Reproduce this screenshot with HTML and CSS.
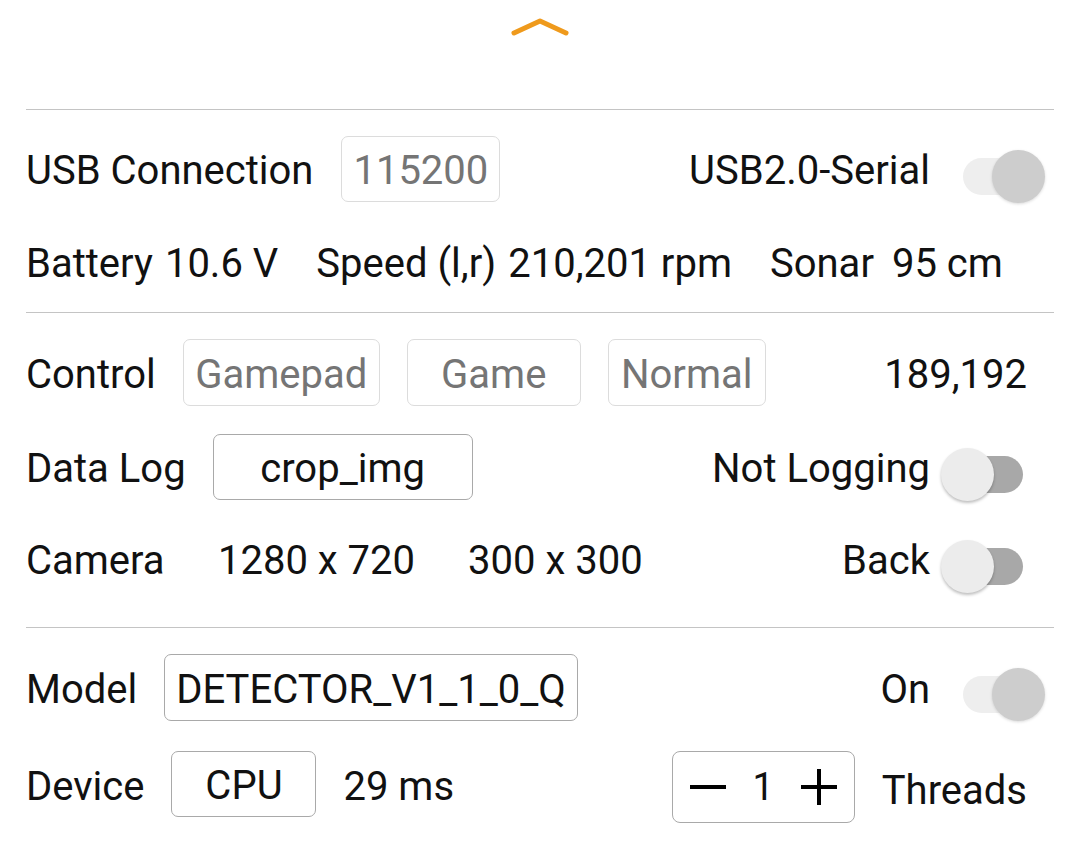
FILE: index.html
```html
<!DOCTYPE html>
<html>
<head>
<meta charset="utf-8">
<link rel="stylesheet" href="styles.css">
</head>
<body>
<div class="sheet">
  <div class="handle">
    <svg width="60" height="20" viewBox="0 0 60 20"><polyline points="4,16 30,4 56,16" fill="none" stroke="#ef9a1c" stroke-width="5" stroke-linecap="round" stroke-linejoin="round"/></svg>
  </div>

  <section class="sec sec1">
    <div class="row r1">
      <span class="label">USB Connection</span>
      <span class="box dis pad">115200</span>
      <span class="right">USB2.0-Serial</span>
      <span class="switch on disabled"><span class="track"></span><span class="knob"></span></span>
    </div>
    <div class="row r2">
      <span class="label">Battery</span>
      <span class="m14">10.6 V</span>
      <span class="m40">Speed (l,r)</span>
      <span class="m14">210,201 rpm</span>
      <span class="m40">Sonar</span>
      <span class="m20">95 cm</span>
    </div>
  </section>

  <section class="sec sec2">
    <div class="row r3">
      <span class="label">Control</span>
      <span class="box dis w-gamepad">Gamepad</span>
      <span class="box dis w-game">Game</span>
      <span class="box dis w-normal">Normal</span>
      <span class="right end">189,192</span>
    </div>
    <div class="row r4">
      <span class="label">Data Log</span>
      <span class="box act w-crop">crop_img</span>
      <span class="right">Not Logging</span>
      <span class="switch off"><span class="track"></span><span class="knob"></span></span>
    </div>
    <div class="row r5">
      <span class="label w-camera">Camera</span>
      <span class="res1">1280 x 720</span>
      <span class="res2">300 x 300</span>
      <span class="right">Back</span>
      <span class="switch off"><span class="track"></span><span class="knob"></span></span>
    </div>
  </section>

  <section class="sec sec3">
    <div class="row r6">
      <span class="label">Model</span>
      <span class="box act pad">DETECTOR_V1_1_0_Q</span>
      <span class="right">On</span>
      <span class="switch on disabled"><span class="track"></span><span class="knob"></span></span>
    </div>
    <div class="row r7">
      <span class="label">Device</span>
      <span class="box act w-cpu">CPU</span>
      <span class="ms">29 ms</span>
      <span class="stepper right">
        <svg class="ic" width="38" height="38" viewBox="0 0 38 38"><rect x="1" y="17" width="36" height="4" fill="#000"/></svg>
        <span class="num">1</span>
        <svg class="ic" width="38" height="38" viewBox="0 0 38 38"><rect x="1" y="17" width="36" height="4" fill="#000"/><rect x="17" y="1" width="4" height="36" fill="#000"/></svg>
      </span>
      <span class="threads">Threads</span>
    </div>
  </section>
</div>
</body>
</html>
```

FILE: styles.css
```css
* { box-sizing: border-box; }
html, body { margin: 0; padding: 0; background: #fff; }
body {
  font-family: Roboto, "Noto Sans", sans-serif;
  font-size: 40px;
  color: #111;
  width: 1078px;
  height: 856px;
  overflow: hidden;
}
.sheet { margin: 0 24px 0 26px; }
.handle {
  height: 110px;
  display: flex;
  justify-content: center;
  align-items: flex-start;
  padding-top: 17px;
  border-bottom: 1px solid #c4c4c4;
}
.handle svg { display: block; }
.sec { border-bottom: 1px solid #c4c4c4; }
.sec3 { border-bottom: none; }
.row { display: flex; align-items: center; padding-top: 3px; }
.label { white-space: nowrap; }
.box {
  display: inline-flex;
  align-items: center;
  justify-content: center;
  border-radius: 7px;
  white-space: nowrap;
  background: #fff;
  padding-top: 3px;
  margin-top: -3px;
}
.box.dis { border: 1.5px solid #dcdcdc; color: #757575; }
.box.act { border: 1.5px solid #a9a9a9; color: #111; }
.pad { padding-left: 11px; padding-right: 11px; }
.right { margin-left: auto; }
.end { margin-right: 27px; }

/* section 1 */
.sec1 { padding-top: 26px; padding-bottom: 17px; }
.r1 { height: 66px; }
.r1 .box { margin-left: 28px; height: 66px; }
.r2 { height: 66px; margin-top: 27px; }
.m14 { margin-left: 12px; }
.m40 { margin-left: 38px; }
.m20 { margin-left: 18px; }

/* section 2 */
.sec2 { padding-top: 26px; padding-bottom: 35px; }
.r3 { height: 67px; }
.r3 .box { height: 67px; margin-left: 27px; }
.r3 .w-gamepad { margin-left: 27px; width: 197px; }
.w-game { width: 174px; }
.w-normal { width: 158px; }
.r4 { height: 66px; margin-top: 28px; }
.w-crop { width: 260px; height: 66px; margin-left: 27px; }
.r5 { height: 66px; margin-top: 26px; }
.w-camera { width: 192px; }
.res2 { margin-left: 53px; }

/* section 3 */
.sec3 { padding-top: 26px; }
.r6 { height: 67px; }
.r6 .box { height: 67px; margin-left: 27px; }
.r7 { height: 72px; margin-top: 30px; align-items: flex-start; padding-top: 0; }
.r7 > .label, .r7 > .ms { line-height: 72px; height: 72px; }
.r7 .box { margin-top: 0; }
.w-cpu { width: 145px; height: 66px; margin-left: 27px; }
.ms { margin-left: 27px; }
.stepper {
  width: 183px;
  height: 72px;
  border: 1.5px solid #a9a9a9;
  border-radius: 8px;
  display: flex;
  align-items: center;
  padding: 0 16px;
  justify-content: space-between;
  color: #111;
}
.stepper .ic { display: block; }
.stepper .num { font-size: 38px; }
.threads { margin-left: 27px; margin-right: 27px; line-height: 80px; }

/* switches */
.switch {
  position: relative;
  display: block;
  width: 104px;
  height: 56px;
  margin-left: 11px;
  margin-right: 9px;
  margin-top: 12px;
  flex: none;
}
.switch .track {
  position: absolute;
  left: 22px;
  top: 9px;
  width: 60px;
  height: 37px;
  border-radius: 19px;
  background: #a8a8a8;
}
.switch .knob {
  position: absolute;
  top: 1px;
  width: 53px;
  height: 53px;
  border-radius: 50%;
  background: #ececec;
  box-shadow: 0 2px 3px rgba(0,0,0,0.25);
}
.switch.off .knob { left: 0; }
.switch.on .knob { left: 51px; }
.switch.disabled .track { background: #eeeeee; }
.switch.disabled .knob { background: #cdcdcd; box-shadow: 0 1px 3px rgba(0,0,0,0.15); }
```
